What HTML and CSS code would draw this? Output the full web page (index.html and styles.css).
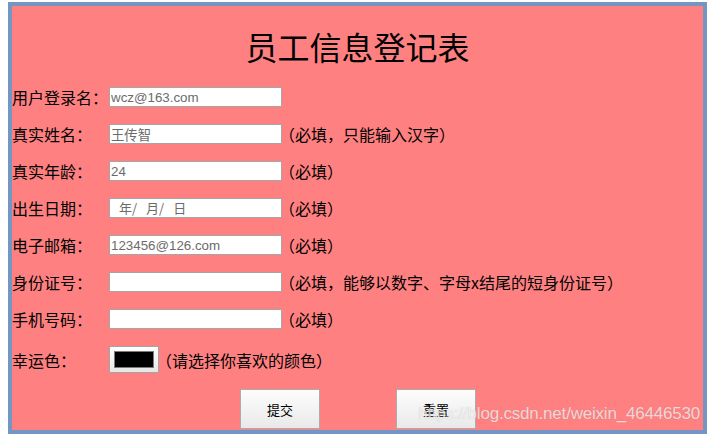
FILE: index.html
```html
<!DOCTYPE html>
<html lang="zh-CN">
<head>
<meta charset="utf-8">
<title>员工信息登记表</title>
<link rel="stylesheet" href="styles.css">
</head>
<body>
<div class="frame">
  <h1 class="title">员工信息登记表</h1>
  <form class="form">
    <div class="row">
      <label class="label">用户登录名：</label>
      <input class="field" type="text" value="wcz@163.com">
    </div>
    <div class="row">
      <label class="label">真实姓名：</label>
      <input class="field" type="text" value="王传智">
      <span class="hint">（必填，只能输入汉字）</span>
    </div>
    <div class="row">
      <label class="label">真实年龄：</label>
      <input class="field" type="text" value="24">
      <span class="hint">（必填）</span>
    </div>
    <div class="row">
      <label class="label">出生日期：</label>
      <div class="field date"><span class="dpart">年/</span><span class="dpart">月/</span><span class="dpart">日</span></div>
      <span class="hint">（必填）</span>
    </div>
    <div class="row">
      <label class="label">电子邮箱：</label>
      <input class="field" type="text" value="123456@126.com">
      <span class="hint">（必填）</span>
    </div>
    <div class="row">
      <label class="label">身份证号：</label>
      <input class="field" type="text" value="">
      <span class="hint">（必填，能够以数字、字母x结尾的短身份证号）</span>
    </div>
    <div class="row">
      <label class="label">手机号码：</label>
      <input class="field" type="text" value="">
      <span class="hint">（必填）</span>
    </div>
    <div class="row row-color">
      <label class="label">幸运色：</label>
      <div class="color-box"><div class="swatch"></div></div>
      <span class="hint hint-color">（请选择你喜欢的颜色）</span>
    </div>
    <div class="buttons">
      <button class="btn" type="button">提交</button>
      <button class="btn" type="button">重置</button>
    </div>
  </form>
  <div class="watermark">https://blog.csdn.net/weixin_46446530</div>
</div>
</body>
</html>
```
FILE: styles.css
```css
html, body {
  margin: 0;
  padding: 0;
  background: #ffffff;
}
body {
  font-family: "Noto Sans CJK SC", "Liberation Sans", sans-serif;
  color: #000;
}
.frame {
  position: relative;
  margin: 2px 0 0 8px;
  width: 691px;
  height: 424px;
  border: 4px solid #7396c2;
  background: #ff8080;
  overflow: hidden;
}
.title {
  margin: 20px 0 0;
  font-size: 32px;
  line-height: 40px;
  font-weight: normal;
  text-align: center;
  font-family: "Noto Sans CJK SC", serif;
}
.form {
  margin-top: 21px;
  display: flex;
  flex-direction: column;
}
.row {
  display: flex;
  align-items: center;
  height: 20px;
  margin-bottom: 17px;
}
.row-color {
  height: 27px;
  margin-bottom: 16px;
}
.label {
  width: 97px;
  flex: none;
  font-size: 16px;
  line-height: 20px;
  white-space: nowrap;
}
.field {
  box-sizing: border-box;
  width: 173px;
  height: 20px;
  margin: 0;
  padding: 0 1px;
  border: 1px solid #a5a5a5;
  background: #fff;
  color: #6b6b6b;
  font-family: "Liberation Sans", "Noto Sans CJK SC", sans-serif;
  font-size: 13.33px;
  line-height: 18px;
  outline: none;
}
.date {
  display: flex;
  align-items: center;
  padding-left: 9px;
  gap: 9px;
}
.dpart {
  font-family: "Noto Sans CJK SC", sans-serif;
  font-size: 13px;
  color: #6b6b6b;
}
.hint {
  margin-left: -3px;
  font-size: 16px;
  line-height: 20px;
  white-space: nowrap;
}
.hint-color {
  margin-left: -3px;
}
.color-box {
  box-sizing: border-box;
  width: 50px;
  height: 27px;
  border: 1px solid #a3a3a3;
  background: linear-gradient(#ffffff, #e6e6e6);
  padding: 4px 4px;
}
.swatch {
  box-sizing: border-box;
  width: 100%;
  height: 100%;
  background: #000;
  border: 1px solid #7a7a7a;
}
.buttons {
  display: flex;
  gap: 76px;
  padding-left: 228px;
}
.btn {
  box-sizing: border-box;
  width: 80px;
  height: 40px;
  margin: 0;
  border: 1px solid #acacac;
  border-radius: 0;
  background: linear-gradient(#fdfdfd, #e9e9e9);
  font-family: "Noto Sans CJK SC", sans-serif;
  font-size: 13px;
  color: #000;
  padding: 0;
}
.watermark {
  position: absolute;
  right: 3px;
  bottom: 6px;
  font-family: "Liberation Sans", sans-serif;
  font-size: 17px;
  color: rgba(255, 255, 255, 0.7);
  text-shadow: 0 0 1px rgba(120, 120, 120, 0.4);
  white-space: nowrap;
  letter-spacing: -0.2px;
}
```
